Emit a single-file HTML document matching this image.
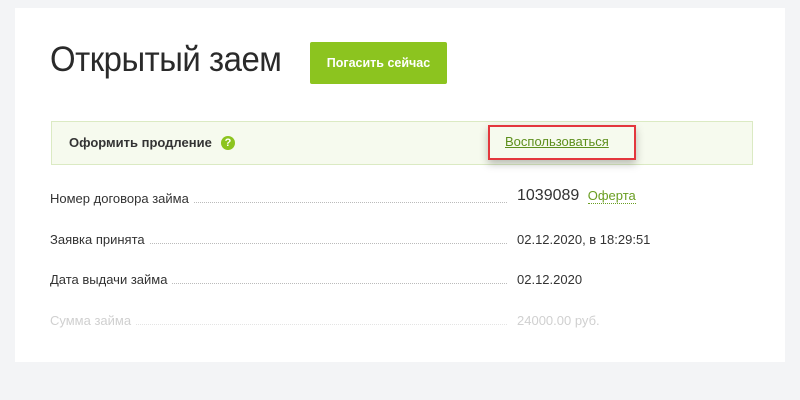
<!DOCTYPE html>
<html><head><meta charset="utf-8"><style>
body{margin:0;width:800px;height:400px;background:#f3f4f6;font-family:"Liberation Sans",Arial,sans-serif;position:relative;overflow:hidden}
.card{position:absolute;left:15px;top:8px;width:770px;height:354px;background:#fff}
.abs{position:absolute;white-space:nowrap}
h1{position:absolute;left:50px;top:40px;margin:0;font-weight:normal;font-size:35px;color:#2a2a2a;letter-spacing:-0.5px;transform:scaleX(0.94);transform-origin:left}
.btn{position:absolute;left:310px;top:42px;width:137px;height:42px;background:#8cc41f;border-radius:2px;color:#fff;font-weight:bold;font-size:12.5px;line-height:42px;text-align:center}
.box{position:absolute;left:51px;top:121px;width:700px;height:42px;background:#f6faee;border:1px solid #dbeac3}
.red{position:absolute;left:488px;top:125px;width:144px;height:31px;border:2px solid #e3373d;background:#f6faee;box-shadow:0 4px 8px rgba(0,0,0,.25)}
.row{position:absolute;left:50px;width:457px;font-size:13px;color:#333;display:flex;align-items:flex-end}
.row .d{flex:1;border-bottom:1px dotted #bbb;margin:0 0 3px 5px}
.val{position:absolute;left:517px;font-size:13px;color:#333}
</style></head><body>
<div class="card"></div>
<h1>Открытый заем</h1>
<div class="btn">Погасить сейчас</div>
<div class="box"></div>
<div class="abs" style="left:69px;top:135px;font-size:13px;font-weight:bold;color:#333">Оформить продление</div>
<div class="abs" style="left:221px;top:136px;width:14px;height:14px;border-radius:50%;background:#8cc41f;color:#fff;font-size:11px;font-weight:bold;text-align:center;line-height:14px">?</div>
<div class="red"></div>
<div class="abs" style="left:505px;top:134px;font-size:13px;color:#5d8f1c;text-decoration:underline">Воспользоваться</div>
<div class="row" style="top:191px"><span>Номер договора займа</span><span class="d"></span></div>
<div class="val" style="top:187px;font-size:16px">1039089 <span style="font-size:13px;color:#6a9e22;border-bottom:1px dotted #6a9e22;margin-left:4px">Оферта</span></div>
<div class="row" style="top:232px"><span>Заявка принята</span><span class="d"></span></div>
<div class="val" style="top:232px">02.12.2020, в 18:29:51</div>
<div class="row" style="top:272px"><span>Дата выдачи займа</span><span class="d"></span></div>
<div class="val" style="top:272px">02.12.2020</div>
<div class="row" style="top:313px;color:#d0d0d0"><span>Сумма займа</span><span class="d" style="border-color:#e4e4e4"></span></div>
<div class="val" style="top:313px;color:#d0d0d0">24000.00 руб.</div>
</body></html>
